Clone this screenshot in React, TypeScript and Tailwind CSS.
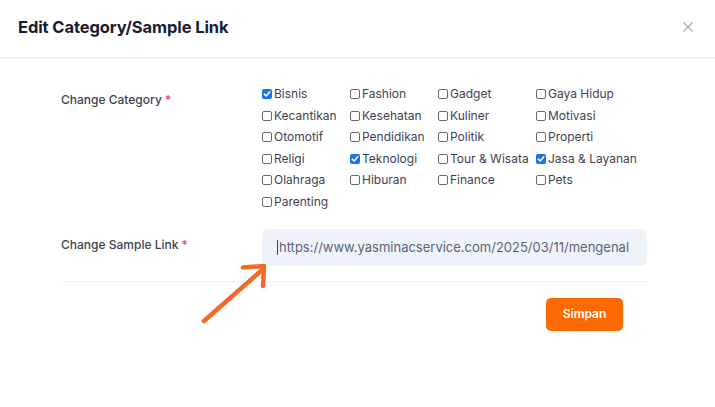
import React from "react";

const cats: [string, boolean][] = [
  ["Bisnis", true], ["Fashion", false], ["Gadget", false], ["Gaya Hidup", false],
  ["Kecantikan", false], ["Kesehatan", false], ["Kuliner", false], ["Motivasi", false],
  ["Otomotif", false], ["Pendidikan", false], ["Politik", false], ["Properti", false],
  ["Religi", false], ["Teknologi", true], ["Tour & Wisata", false], ["Jasa & Layanan", true],
  ["Olahraga", false], ["Hiburan", false], ["Finance", false], ["Pets", false],
  ["Parenting", false],
];

function Box({ checked }: { checked: boolean }) {
  if (checked)
    return (
      <span className="w-[10px] h-[10px] rounded-[2px] bg-[#1a73e8] flex items-center justify-center shrink-0">
        <svg width="8" height="8" viewBox="0 0 8 8">
          <path d="M1.3 4.2 L3.2 6 L6.8 1.8" stroke="white" strokeWidth="1.6" fill="none" strokeLinecap="round" strokeLinejoin="round" />
        </svg>
      </span>
    );
  return <span className="w-[10px] h-[10px] rounded-[2px] border border-[#6b6b6b] bg-white shrink-0" />;
}

export default function App() {
  return (
    <div className="w-[715px] h-[407px] bg-white relative overflow-hidden text-[#3f4254]" style={{ fontFamily: "Inter, 'Open Sans', sans-serif" }}>
      <div className="h-[59px] flex items-center justify-between pl-[18px] pr-[21px] border-b-2 border-[#f1f1f4]">
        <h2 className="text-[16.5px] font-bold text-[#181c32] tracking-[-0.1px] pb-[3px]">Edit Category/Sample Link</h2>
        <svg width="12" height="12" viewBox="0 0 12 12" className="mb-[4px]">
          <path d="M1.5 1.5 L10.5 10.5 M10.5 1.5 L1.5 10.5" stroke="#a1a5b7" strokeWidth="1.2" />
        </svg>
      </div>
      <div className="pl-[61px] pr-[68px] pt-[26px]">
        <div className="flex">
          <div className="w-[201px] shrink-0 pt-[6px] text-[12px] font-medium text-[#3f4254]">
            Change Category <span className="text-[#f1416c]">*</span>
          </div>
          <div className="grid grid-cols-[88px_88px_98px_111px] gap-y-[3.6px] text-[12px] text-[#3f4254]">
            {cats.map(([n, c]) => (
              <div key={n} className="flex items-center gap-[2px] h-[18px]">
                <Box checked={c} />
                <span className="whitespace-nowrap leading-none">{n}</span>
              </div>
            ))}
          </div>
        </div>
        <div className="flex mt-[18px]">
          <div className="w-[201px] shrink-0 pt-[7px] text-[12px] font-medium text-[#3f4254]">
            Change Sample Link <span className="text-[#f1416c]">*</span>
          </div>
          <div className="flex-1 h-[37px] bg-[#eef3f9] rounded-[6px] flex items-center pl-[15px] overflow-hidden">
            <span className="w-px h-[15px] bg-[#3f4254] mr-px" />
            <span className="text-[13px] text-[#5e6278] whitespace-nowrap">https://www.yasminacservice.com/2025/03/11/mengenal</span>
          </div>
        </div>
        <div className="mt-[15px] border-t border-[#eff2f5]" />
        <div className="flex justify-end pr-[24px] mt-[16px]">
          <button className="w-[77px] h-[33px] bg-[#ff6a00] rounded-[5px] text-white text-[12px] font-semibold">Simpan</button>
        </div>
      </div>
      <svg className="absolute left-0 top-0 pointer-events-none" width="715" height="407">
        <g stroke="#f26a26" strokeWidth="4.5" strokeLinecap="round" strokeLinejoin="round" fill="none">
          <path d="M204 321 L262 270" />
          <path d="M243 267.5 L264 266 L263 286" />
        </g>
      </svg>
    </div>
  );
}
